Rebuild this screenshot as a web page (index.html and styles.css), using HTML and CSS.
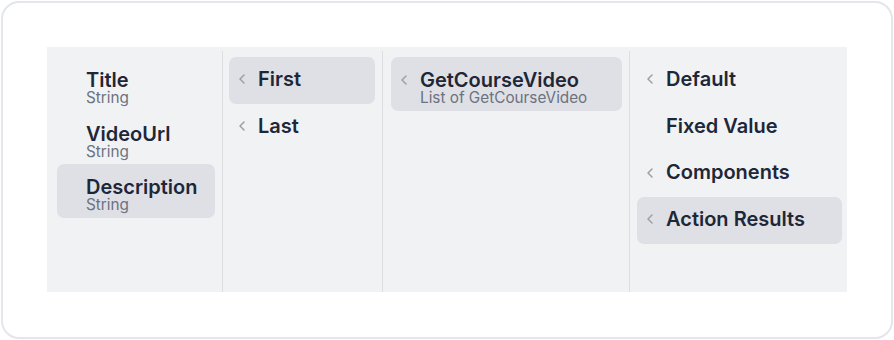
FILE: index.html
```html
<!DOCTYPE html>
<html lang="en">
<head>
    <meta charset="UTF-8">
    <meta name="viewport" content="width=device-width, initial-scale=1.0">
    <title>Data Source Picker</title>
    <link rel="stylesheet" href="styles.css">
</head>
<body>
    <div class="card">
        <div class="picker">
            <div class="column column-fields">
                <div class="item item-two">
                    <span class="chevron-space"></span>
                    <div class="item-text">
                        <div class="item-title">Title</div>
                        <div class="item-sub">String</div>
                    </div>
                </div>
                <div class="item item-two">
                    <span class="chevron-space"></span>
                    <div class="item-text">
                        <div class="item-title">VideoUrl</div>
                        <div class="item-sub">String</div>
                    </div>
                </div>
                <div class="item item-two active">
                    <span class="chevron-space"></span>
                    <div class="item-text">
                        <div class="item-title">Description</div>
                        <div class="item-sub">String</div>
                    </div>
                </div>
            </div>

            <div class="column column-pick">
                <div class="item active">
                    <span class="chevron-space"><svg class="chevron" viewBox="0 0 8 10"><path d="M6 1 L2 5 L6 9"/></svg></span>
                    <div class="item-title">First</div>
                </div>
                <div class="item">
                    <span class="chevron-space"><svg class="chevron" viewBox="0 0 8 10"><path d="M6 1 L2 5 L6 9"/></svg></span>
                    <div class="item-title">Last</div>
                </div>
            </div>

            <div class="column column-actions">
                <div class="item item-two active">
                    <span class="chevron-space"><svg class="chevron" viewBox="0 0 8 10"><path d="M6 1 L2 5 L6 9"/></svg></span>
                    <div class="item-text">
                        <div class="item-title">GetCourseVideo</div>
                        <div class="item-sub">List of GetCourseVideo</div>
                    </div>
                </div>
            </div>

            <div class="column column-sources">
                <div class="item">
                    <span class="chevron-space"><svg class="chevron" viewBox="0 0 8 10"><path d="M6 1 L2 5 L6 9"/></svg></span>
                    <div class="item-title">Default</div>
                </div>
                <div class="item">
                    <span class="chevron-space"></span>
                    <div class="item-title">Fixed Value</div>
                </div>
                <div class="item">
                    <span class="chevron-space"><svg class="chevron" viewBox="0 0 8 10"><path d="M6 1 L2 5 L6 9"/></svg></span>
                    <div class="item-title">Components</div>
                </div>
                <div class="item active">
                    <span class="chevron-space"><svg class="chevron" viewBox="0 0 8 10"><path d="M6 1 L2 5 L6 9"/></svg></span>
                    <div class="item-title">Action Results</div>
                </div>
            </div>
        </div>
    </div>
</body>
</html>
```

FILE: styles.css
```css
body {
    margin: 0;
    padding: 1px;
    background-color: #fff;
    font-family: 'Inter', 'Noto Sans', sans-serif;
    color: #1f2937;
}

.card {
    height: 338px;
    box-sizing: border-box;
    border: 2px solid #e3e6ea;
    border-radius: 18px;
    padding: 44px;
}

.picker {
    display: grid;
    grid-template-columns: 176px 160px 247px 1fr;
    height: 245px;
    background-color: #f1f2f4;
}

.column {
    margin-top: 4px;
    padding: 6px 7px;
    border-right: 1px solid #dcdee2;
    display: flex;
    flex-direction: column;
}

.column-fields {
    padding-left: 10px;
}

.column-pick {
    padding-left: 6px;
}

.column-actions {
    padding-left: 8px;
}

.column-sources {
    border-right: none;
    padding-right: 5px;
}

.item {
    display: flex;
    align-items: flex-start;
    padding: 9px 10px 11px 9px;
    border-radius: 7px;
}

.item.active {
    background-color: #dfe0e5;
}

.item-two {
    padding-top: 13px;
    padding-bottom: 4.5px;
}

.chevron-space {
    flex: 0 0 12px;
    height: 26.67px;
    margin-right: 8px;
    display: flex;
    align-items: center;
}

.item-two .chevron-space {
    height: 20px;
}

.chevron {
    width: 8px;
    height: 10px;
    fill: none;
    stroke: #9aa0a8;
    stroke-width: 1.5;
    stroke-linecap: round;
    stroke-linejoin: round;
}

.item-title {
    font-size: 20px;
    font-weight: 600;
    line-height: 26.67px;
    color: #1e2738;
    white-space: nowrap;
}

.item-two .item-title {
    line-height: 20px;
}

.item-sub {
    font-size: 15.3px;
    line-height: 16px;
    color: #6b7280;
    white-space: nowrap;
}
```
